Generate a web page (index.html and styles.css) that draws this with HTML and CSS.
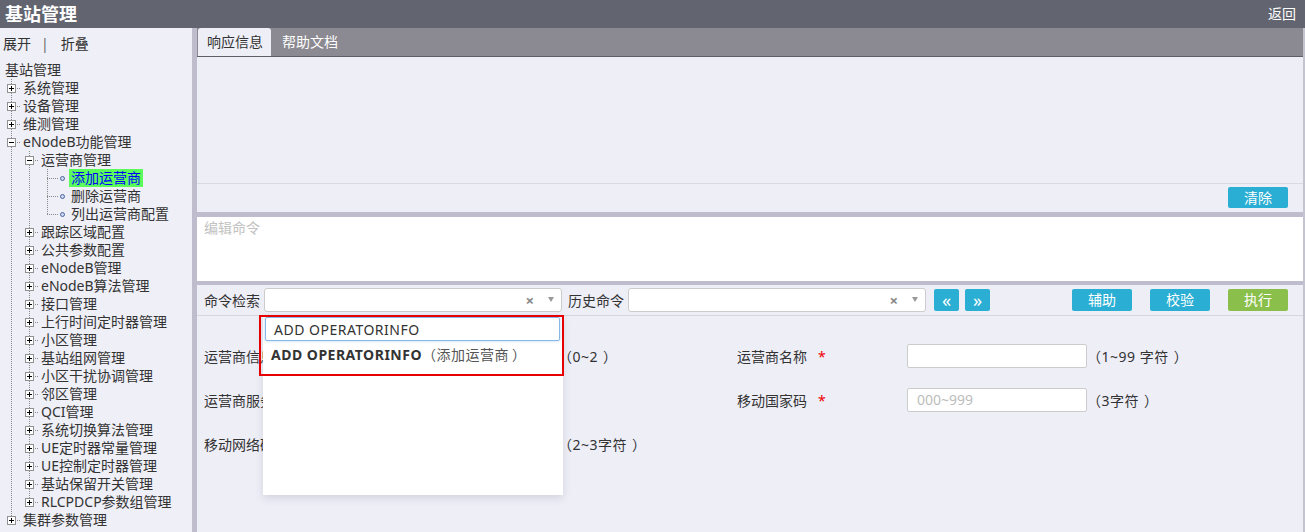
FILE: index.html
```html
<!DOCTYPE html>
<html lang="zh-CN">
<head>
<meta charset="utf-8">
<title>基站管理</title>
<link rel="stylesheet" href="styles.css">
</head>
<body>
<header class="topbar">
  <h1 class="title">基站管理</h1>
  <a class="back">返回</a>
</header>
<div class="layout">
  <aside class="sidebar">
    <div class="tree-tools"><span>展开</span><span class="bar">|</span><span>折叠</span></div>
    <ul class="tree">
      <li class="row"><span class="label root">基站管理</span></li>
      <li class="row"><span class="cn full"><i class="box plus"></i></span><span class="label">系统管理</span></li>
      <li class="row"><span class="cn full"><i class="box plus"></i></span><span class="label">设备管理</span></li>
      <li class="row"><span class="cn full"><i class="box plus"></i></span><span class="label">维测管理</span></li>
      <li class="row"><span class="cn full"><i class="box minus"></i></span><span class="label">eNodeB功能管理</span></li>
      <li class="row"><span class="ind v"></span><span class="cn full"><i class="box minus"></i></span><span class="label">运营商管理</span></li>
      <li class="row"><span class="ind v"></span><span class="ind v"></span><span class="lf full"><i class="dot"></i></span><span class="label leaf selected">添加运营商</span></li>
      <li class="row"><span class="ind v"></span><span class="ind v"></span><span class="lf full"><i class="dot"></i></span><span class="label leaf">删除运营商</span></li>
      <li class="row"><span class="ind v"></span><span class="ind v"></span><span class="lf half"><i class="dot"></i></span><span class="label leaf">列出运营商配置</span></li>
      <li class="row"><span class="ind v"></span><span class="cn full"><i class="box plus"></i></span><span class="label">跟踪区域配置</span></li>
      <li class="row"><span class="ind v"></span><span class="cn full"><i class="box plus"></i></span><span class="label">公共参数配置</span></li>
      <li class="row"><span class="ind v"></span><span class="cn full"><i class="box plus"></i></span><span class="label">eNodeB管理</span></li>
      <li class="row"><span class="ind v"></span><span class="cn full"><i class="box plus"></i></span><span class="label">eNodeB算法管理</span></li>
      <li class="row"><span class="ind v"></span><span class="cn full"><i class="box plus"></i></span><span class="label">接口管理</span></li>
      <li class="row"><span class="ind v"></span><span class="cn full"><i class="box plus"></i></span><span class="label">上行时间定时器管理</span></li>
      <li class="row"><span class="ind v"></span><span class="cn full"><i class="box plus"></i></span><span class="label">小区管理</span></li>
      <li class="row"><span class="ind v"></span><span class="cn full"><i class="box plus"></i></span><span class="label">基站组网管理</span></li>
      <li class="row"><span class="ind v"></span><span class="cn full"><i class="box plus"></i></span><span class="label">小区干扰协调管理</span></li>
      <li class="row"><span class="ind v"></span><span class="cn full"><i class="box plus"></i></span><span class="label">邻区管理</span></li>
      <li class="row"><span class="ind v"></span><span class="cn full"><i class="box plus"></i></span><span class="label">QCI管理</span></li>
      <li class="row"><span class="ind v"></span><span class="cn full"><i class="box plus"></i></span><span class="label">系统切换算法管理</span></li>
      <li class="row"><span class="ind v"></span><span class="cn full"><i class="box plus"></i></span><span class="label">UE定时器常量管理</span></li>
      <li class="row"><span class="ind v"></span><span class="cn full"><i class="box plus"></i></span><span class="label">UE控制定时器管理</span></li>
      <li class="row"><span class="ind v"></span><span class="cn full"><i class="box plus"></i></span><span class="label">基站保留开关管理</span></li>
      <li class="row"><span class="ind v"></span><span class="cn half"><i class="box plus"></i></span><span class="label">RLCPDCP参数组管理</span></li>
      <li class="row"><span class="cn half"><i class="box plus"></i></span><span class="label">集群参数管理</span></li>
    </ul>
  </aside>
  <main class="main">
    <nav class="tabs">
      <span class="tab active">响应信息</span>
      <span class="tab">帮助文档</span>
    </nav>
    <section class="response"></section>
    <div class="btnrow"><button class="btn">清除</button></div>
    <div class="sep sep5"></div>
    <div class="editor">编辑命令</div>
    <div class="sep sep4"></div>
    <div class="cmdrow">
      <span class="cmd-label">命令检索</span>
      <div class="select-wrap">
        <div class="select"><span class="clear">×</span><span class="caret"></span></div>
        <div class="dropdown">
          <div class="search">ADD OPERATORINFO</div>
          <div class="result"><b>ADD OPERATORINFO</b><span class="desc">（添加运营商<span class="rp">）</span></span></div>
        </div>
        <div class="annot"></div>
      </div>
      <span class="cmd-label">历史命令</span>
      <div class="select-wrap">
        <div class="select"><span class="clear">×</span><span class="caret"></span></div>
      </div>
      <button class="btn nav first">«</button>
      <button class="btn nav">»</button>
      <span class="spacer"></span>
      <button class="btn">辅助</button>
      <button class="btn">校验</button>
      <button class="btn green">执行</button>
    </div>
    <section class="form">
      <div class="grid">
        <span class="flabel">运营商信息索引 <em>*</em></span>
        <span class="input"></span>
        <span class="hint">（0~2<span class="rp">）</span></span>
        <span class="flabel">运营商名称<em>*</em></span>
        <span class="input"></span>
        <span class="hint">（1~99 字符<span class="rp">）</span></span>

        <span class="flabel">运营商服务类型</span>
        <span class="input"></span>
        <span class="hint"></span>
        <span class="flabel">移动国家码<em>*</em></span>
        <span class="input"><span class="ph">000~999</span></span>
        <span class="hint">（3字符<span class="rp">）</span></span>

        <span class="flabel">移动网络码 <em>*</em></span>
        <span class="input"></span>
        <span class="hint">（2~3字符<span class="rp">）</span></span>
      </div>
    </section>
  </main>
</div>
</body>
</html>
```
FILE: styles.css
```css
* { box-sizing: border-box; }
html, body { margin: 0; padding: 0; }
body {
  width: 1305px;
  height: 532px;
  overflow: hidden;
  font-family: "Noto Sans", "Noto Sans CJK SC", sans-serif;
  font-size: 14px;
  color: #333;
  background: #eeeef7;
  text-spacing-trim: space-all;
}
ul { list-style: none; margin: 0; padding: 0; }

.topbar {
  height: 28px;
  background: #62646f;
  display: flex;
  align-items: center;
  justify-content: space-between;
  padding: 0 9px 0 5px;
}
.title { margin: 0; font-size: 18px; font-weight: bold; color: #fff; line-height: 28px; }
.back { color: #fff; font-size: 14px; line-height: 28px; }

.layout { display: flex; height: 504px; }

.sidebar {
  width: 197px;
  flex: none;
  background: #efeff7;
  border-right: 5px solid #bfbdcd;
  padding-left: 2px;
}
.tree-tools { padding: 7px 0 0 1px; line-height: 18px; height: 33px; display: flex; }
.tree-tools .bar { margin: 0 12px 0 10px; color: #666; }

.tree .row { height: 18px; line-height: 18px; display: flex; white-space: nowrap; }
.label { margin-left: 2px; }
.label.root { margin-left: 3px; }

.ind { width: 18px; flex: none; }
.ind.v {
  background: repeating-linear-gradient(to bottom, #8a8a8a 0 1px, transparent 1px 2px) 9px 0 / 1px 100% no-repeat;
}
.cn, .lf { flex: none; display: flex; align-items: flex-start; }
.cn { width: 19px; }
.lf { width: 31px; }
.cn.full, .lf.full {
  background:
    repeating-linear-gradient(to bottom, #8a8a8a 0 1px, transparent 1px 2px) 9px 0 / 1px 100% no-repeat,
    repeating-linear-gradient(to right, #8a8a8a 0 1px, transparent 1px 2px) 9px 9px / 10px 1px no-repeat;
}
.cn.half, .lf.half {
  background:
    repeating-linear-gradient(to bottom, #8a8a8a 0 1px, transparent 1px 2px) 9px 0 / 1px 9px no-repeat,
    repeating-linear-gradient(to right, #8a8a8a 0 1px, transparent 1px 2px) 9px 9px / 10px 1px no-repeat;
}
.lf.full { background-size: 1px 100%, 12px 1px; }
.lf.half { background-size: 1px 9px, 12px 1px; }

.box {
  width: 9px; height: 9px;
  margin: 5px 0 0 5px;
  border: 1px solid #919191;
  background-color: #fff;
}
.box.plus {
  background:
    linear-gradient(#000, #000) center / 5px 1px no-repeat,
    linear-gradient(#000, #000) center / 1px 5px no-repeat,
    #fff;
}
.box.minus {
  background: linear-gradient(#000, #000) center / 5px 1px no-repeat, #fff;
}
.dot {
  width: 5px; height: 5px;
  margin: 7px 0 0 22px;
  border-radius: 50%;
  border: 1.5px solid #4a64a0;
  background: #cfd8ee;
}
.label.leaf { margin-left: 0; padding: 0 2px; }
.label.selected { background: #5cfb5c; color: #0000ff; }

.main {
  flex: 1;
  display: flex;
  flex-direction: column;
  background: #eeeef7;
  border-right: 2px solid #c4c3d0;
}
.tabs {
  height: 29px;
  flex: none;
  background: #8b8991;
  border-bottom: 1px solid #5f5f6a;
  display: flex;
  align-items: flex-end;
  padding-left: 1px;
}
.tab { height: 28px; line-height: 28px; padding: 0 9px 0 10px; color: #fff; }
.tab.active { background: #eeeef7; color: #333; border-radius: 3px 3px 0 0; padding: 0 8px 0 9px; margin-right: 1px; }

.response { height: 127px; flex: none; border-bottom: 1px solid #d9d9e0; }
.btnrow { height: 28px; flex: none; display: flex; justify-content: flex-end; padding: 3px 15px 0 0; }
.btn {
  width: 60px; height: 21px;
  border: 0; border-radius: 2px;
  background: #2aaed3;
  color: #fff;
  font-family: inherit; font-size: 14px; line-height: 21px;
  padding: 0;
}
.btn.green { background: #8bbf4b; }
.sep { background: #bfbdcd; flex: none; }
.sep5 { height: 5px; }
.sep4 { height: 4px; }
.editor { height: 64px; flex: none; background: #fff; color: #c2c2c2; padding: 2px 7px; line-height: 18px; }

.cmdrow {
  height: 31px; flex: none;
  display: flex; align-items: center;
  padding: 0 15px 1px 7px;
  border-bottom: 1px solid #d6d6dc;
}
.cmd-label { width: 60px; flex: none; }
.select-wrap { position: relative; width: 298px; flex: none; }
.select-wrap + .cmd-label { margin-left: 6px; }
.select {
  height: 24px;
  background: #fff;
  border: 1px solid #ccc;
  border-radius: 3px;
  display: flex; align-items: center; justify-content: flex-end;
  padding-right: 7px;
}
.clear { color: #888; font-weight: bold; font-size: 15px; line-height: 20px; margin-right: 14px; }
.caret { width: 0; height: 0; border-left: 3px solid transparent; border-right: 3px solid transparent; border-top: 5px solid #999; }
.btn.nav { width: 25px; height: 22px; font-size: 18px; line-height: 20px; margin-left: 6px; }
.btn.nav.first { margin-left: 8px; }
.spacer { flex: 1; }
.cmdrow .btn:not(.nav) { height: 22px; line-height: 22px; margin-left: 18px; }

.dropdown {
  position: absolute;
  top: 27px; left: -1px; right: -1px;
  height: 180px;
  background: #fff;
  box-shadow: 0 3px 8px rgba(60, 60, 90, 0.15);
  padding: 2px 3px 0 2px;
  z-index: 2;
}
.search {
  height: 24px;
  border: 1px solid #86b7e6;
  border-radius: 2px;
  box-shadow: 0 0 3px rgba(102, 170, 230, 0.5);
  padding: 1px 0 0 8px;
  line-height: 22px;
  color: #333;
  letter-spacing: 0.5px;
}
.result { padding-left: 6px; line-height: 28px; color: #333; white-space: nowrap; }
.result b { letter-spacing: 0.5px; }
.result .desc { color: #555; letter-spacing: 0.5px; }
.result .rp { margin-left: 3px; }
.annot {
  position: absolute;
  top: 27px; left: -5px;
  width: 305px; height: 61px;
  border: 2px solid #e60000;
  z-index: 3;
}

.form { flex: 1; padding: 28px 0 0 7px; }
.grid {
  display: grid;
  grid-template-columns: 174px 180px 179px 170px 180px auto;
  grid-auto-rows: 24px;
  row-gap: 20px;
  align-items: center;
}
.flabel { white-space: nowrap; }
.flabel em { font-style: normal; color: #e00; margin-left: 11px; }
.input { height: 24px; background: #fff; border: 1px solid #ccc; border-radius: 2px; padding-left: 9px; line-height: 22px; }
.ph { color: #bdbdbd; }
.hint { padding-left: 0; white-space: nowrap; letter-spacing: 0.5px; }
.hint .rp { margin-left: 5px; }
```
